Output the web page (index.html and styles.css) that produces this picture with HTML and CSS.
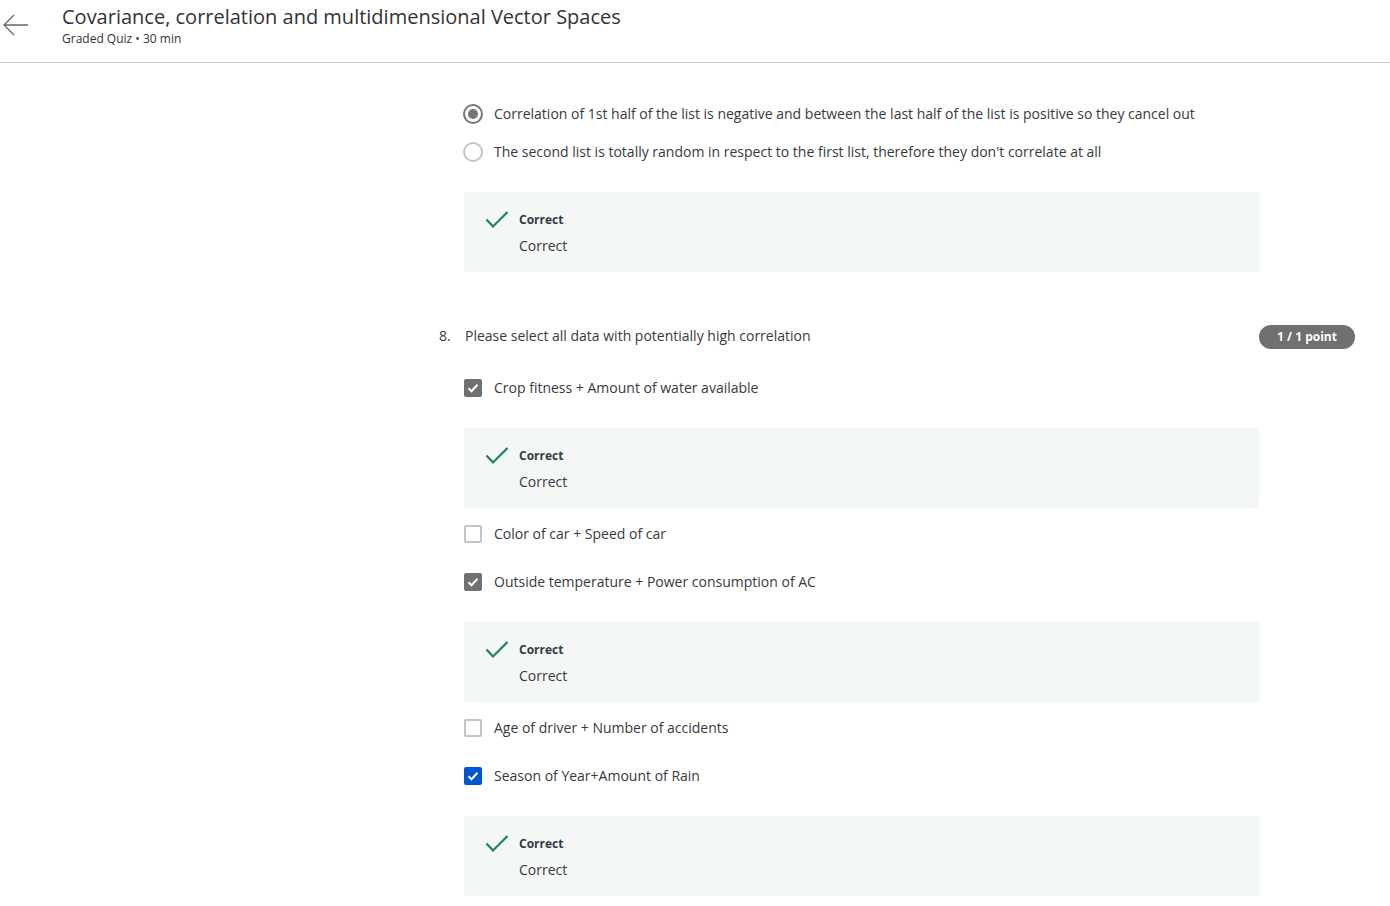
FILE: index.html
```html
<!DOCTYPE html>
<html>
<head>
<meta charset="utf-8">
<link rel="stylesheet" href="styles.css">
</head>
<body>
<header class="header">
  <button class="back" aria-label="Back">
    <svg width="26" height="22" viewBox="0 0 26 22"><path d="M25 11H1M11 1L1 11l10 10" fill="none" stroke="#666" stroke-width="1.3"/></svg>
  </button>
  <div class="heading">
    <h1 class="title">Covariance, correlation and multidimensional Vector Spaces</h1>
    <div class="subtitle">Graded Quiz • 30 min</div>
  </div>
</header>
<main class="main">
  <section class="question q-cont">
    <div class="qbody">
      <div class="option first">
        <span class="radio checked"></span>
        <span class="label">Correlation of 1st half of the list is negative and between the last half of the list is positive so they cancel out</span>
      </div>
      <div class="option radio-row">
        <span class="radio"></span>
        <span class="label">The second list is totally random in respect to the first list, therefore they don't correlate at all</span>
      </div>
      <div class="feedback">
        <svg class="tick" width="24" height="18" viewBox="0 0 24 18"><path d="M1.5 8.5l6.5 7L22.5 1" fill="none" stroke="#1f8354" stroke-width="2.2"/></svg>
        <div class="fb-text">
          <div class="fb-title">Correct</div>
          <div class="fb-msg">Correct</div>
        </div>
      </div>
    </div>
  </section>

  <section class="question q8">
    <div class="qhead">
      <div class="qnum">8.</div>
      <div class="qtext">Please select all data with potentially high correlation</div>
      <div class="badge">1 / 1 point</div>
    </div>
    <div class="qbody">
      <div class="option first">
        <span class="checkbox checked"><svg width="14" height="14" viewBox="0 0 14 14"><path d="M2.5 7.2l3 3 6-6.5" fill="none" stroke="#fff" stroke-width="2"/></svg></span>
        <span class="label">Crop fitness + Amount of water available</span>
      </div>
      <div class="feedback">
        <svg class="tick" width="24" height="18" viewBox="0 0 24 18"><path d="M1.5 8.5l6.5 7L22.5 1" fill="none" stroke="#1f8354" stroke-width="2.2"/></svg>
        <div class="fb-text">
          <div class="fb-title">Correct</div>
          <div class="fb-msg">Correct</div>
        </div>
      </div>
      <div class="option">
        <span class="checkbox"></span>
        <span class="label">Color of car + Speed of car</span>
      </div>
      <div class="option">
        <span class="checkbox checked"><svg width="14" height="14" viewBox="0 0 14 14"><path d="M2.5 7.2l3 3 6-6.5" fill="none" stroke="#fff" stroke-width="2"/></svg></span>
        <span class="label">Outside temperature + Power consumption of AC</span>
      </div>
      <div class="feedback">
        <svg class="tick" width="24" height="18" viewBox="0 0 24 18"><path d="M1.5 8.5l6.5 7L22.5 1" fill="none" stroke="#1f8354" stroke-width="2.2"/></svg>
        <div class="fb-text">
          <div class="fb-title">Correct</div>
          <div class="fb-msg">Correct</div>
        </div>
      </div>
      <div class="option">
        <span class="checkbox"></span>
        <span class="label">Age of driver + Number of accidents</span>
      </div>
      <div class="option">
        <span class="checkbox checked blue"><svg width="14" height="14" viewBox="0 0 14 14"><path d="M2.5 7.2l3 3 6-6.5" fill="none" stroke="#fff" stroke-width="2"/></svg></span>
        <span class="label">Season of Year+Amount of Rain</span>
      </div>
      <div class="feedback">
        <svg class="tick" width="24" height="18" viewBox="0 0 24 18"><path d="M1.5 8.5l6.5 7L22.5 1" fill="none" stroke="#1f8354" stroke-width="2.2"/></svg>
        <div class="fb-text">
          <div class="fb-title">Correct</div>
          <div class="fb-msg">Correct</div>
        </div>
      </div>
    </div>
  </section>
</main>
</body>
</html>
```
FILE: styles.css
```css
* { box-sizing: border-box; }
html, body { margin: 0; padding: 0; background: #fff; }
body {
  font-family: "Open Sans", "Noto Sans", sans-serif;
  color: #373a3c;
  font-size: 14px;
  overflow: hidden;
  height: 906px;
}
.header {
  display: flex;
  align-items: flex-start;
  height: 63px;
  border-bottom: 1px solid #c8c8c8;
}
.back {
  border: 0;
  background: none;
  padding: 0;
  margin: 14px 0 0 3px;
  width: 26px;
  height: 22px;
  cursor: pointer;
}
.heading { margin-left: 33px; padding-top: 3px; }
.title {
  margin: 0;
  font-size: 20px;
  font-weight: 400;
  line-height: 28px;
  color: #333;
}
.subtitle {
  font-size: 12px;
  line-height: 16px;
  color: #333;
}
.main {
  padding-left: 439px;
  padding-top: 39px;
}
.question { width: 916px; }
.qbody { margin-left: 25px; width: 795px; }
.option {
  display: flex;
  align-items: center;
  height: 24px;
  margin-top: 24px;
  line-height: 24px;
}
.option.first { margin-top: 0; }
.option.radio-row { margin-top: 14px; }
.feedback + .option { margin-top: 14px; }
.label { margin-left: 11px; color: #373a3c; }
.radio {
  width: 20px;
  height: 20px;
  margin-left: -1px;
  border-radius: 50%;
  border: 2px solid #c4c4c4;
  display: inline-flex;
  align-items: center;
  justify-content: center;
  flex: none;
}
.radio.checked { border-color: #757575; }
.radio.checked::after {
  content: "";
  width: 10px;
  height: 10px;
  border-radius: 50%;
  background: #757575;
}
.checkbox {
  width: 18px;
  height: 18px;
  border: 2px solid #c4c4c4;
  border-radius: 2px;
  display: inline-flex;
  align-items: center;
  justify-content: center;
  flex: none;
  margin-right: 1px;
}
.checkbox.checked { background: #707070; border-color: #707070; }
.checkbox.blue { background: #0056d2; border-color: #0056d2; }
.feedback {
  display: flex;
  align-items: flex-start;
  margin-top: 28px;
  height: 80px;
  background: #f3f8f6;
  padding: 19px 0 0 21px;
}
.tick { flex: none; margin-top: 0; }
.fb-text { margin-left: 10px; }
.fb-title { font-size: 12px; font-weight: 700; line-height: 18px; color: #373a3c; }
.fb-msg { font-size: 14px; line-height: 20px; margin-top: 7px; color: #373a3c; }
.q8 { margin-top: 52px; }
.qhead {
  display: flex;
  align-items: flex-start;
  height: 24px;
  margin-bottom: 28px;
  line-height: 24px;
}
.qhead .qnum { width: 26px; flex: none; }
.qtext { flex: 1; }
.badge {
  flex: none;
  width: 96px;
  height: 24px;
  margin-top: 1px;
  border-radius: 12px;
  background: #707070;
  color: #fff;
  font-size: 12px;
  font-weight: 700;
  line-height: 24px;
  text-align: center;
}
```
